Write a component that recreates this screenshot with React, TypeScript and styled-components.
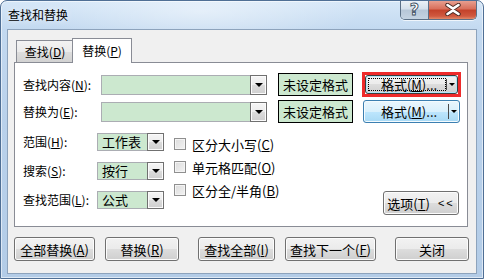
import React from 'react'
import styled, { createGlobalStyle, css } from 'styled-components'

const GlobalStyle = createGlobalStyle`
  html, body { margin: 0; padding: 0; background: #fff; }
  body {
    font-family: 'Noto Sans CJK SC', 'Microsoft YaHei', sans-serif;
    font-size: 12px;
    color: #000;
  }
  * { box-sizing: border-box; }
  u { text-underline-offset: 1px; }
`

const Window = styled.div`
  width: 484px;
  height: 279px;
  display: flex;
  flex-direction: column;
  border: 1px solid #4f6f95;
  border-radius: 7px 7px 0 0;
  overflow: hidden;
  background:
    radial-gradient(ellipse 160px 40px at 200px 10px, rgba(255, 255, 255, 0.45), rgba(255, 255, 255, 0)),
    linear-gradient(180deg, #d6e7f8 0px, #c3d9f0 28px, #b9d1eb 120px, #b3cce7 100%);
  box-shadow: inset 0 0 0 1px rgba(255, 255, 255, 0.55);
`

const TitleBar = styled.div`
  height: 28px;
  display: flex;
  align-items: flex-start;
  padding: 0 6px 0 7px;
`

const Title = styled.div`
  line-height: 28px;
  font-size: 12px;
  text-shadow: 0 0 6px rgba(255, 255, 255, 0.9);
`

const CaptionGroup = styled.div`
  margin-left: auto;
  margin-top: -1px;
  display: flex;
  height: 20px;
  border: 1px solid #5b6f86;
  border-top: none;
  border-radius: 0 0 5px 5px;
  overflow: hidden;
  box-shadow: 0 1px 0 rgba(255, 255, 255, 0.7);
`

const CaptionBtn = styled.div<{ $close?: boolean }>`
  height: 100%;
  display: flex;
  align-items: center;
  justify-content: center;
  ${(p) =>
    p.$close
      ? css`
          width: 47px;
          background: linear-gradient(180deg, #e9a596 0%, #d9715d 45%, #c4432b 55%, #d0593f 85%, #e28a6a 100%);
        `
      : css`
          width: 28px;
          border-right: 1px solid #5b6f86;
          background: linear-gradient(180deg, #eef3f8 0%, #d6e1ec 45%, #b7c7d8 55%, #c4d3e2 100%);
        `}
`

const HelpGlyph = styled.span`
  font-family: 'DejaVu Sans', sans-serif;
  font-weight: bold;
  font-size: 16px;
  line-height: 1;
  color: #fff;
  -webkit-text-stroke: 0.9px #3c4c5e;
`

const Client = styled.div`
  flex: 1;
  margin: 0 6px 4px 6px;
  background: #f0f0f0;
  border: 1px solid #8da3bc;
  padding: 8px 8px 0 6px;
`

const TabStrip = styled.div`
  display: flex;
  align-items: flex-end;
  height: 25px;
  margin-left: 2px;
  margin-bottom: -1px;
  position: relative;
  z-index: 1;
`

const Tab = styled.div<{ $active?: boolean }>`
  display: flex;
  align-items: center;
  justify-content: center;
  border: 1px solid #898c95;
  ${(p) =>
    p.$active
      ? css`
          height: 25px;
          width: 60px;
          background: #fff;
          border-bottom: none;
          margin-left: -1px;
          padding-bottom: 2px;
        `
      : css`
          height: 23px;
          width: 57px;
          background: linear-gradient(180deg, #f3f3f3 0%, #ebebeb 50%, #dedede 50%, #d2d2d2 100%);
          border-right: none;
        `}
`

const Panel = styled.div`
  width: 454px;
  height: 165px;
  background: #fff;
  border: 1px solid #898c95;
  padding: 9px 8px 0 8px;
  display: flex;
  flex-direction: column;
`

const Row = styled.div`
  display: flex;
  align-items: center;
  height: 25px;
  & + & {
    margin-top: 2px;
  }
`

const Label = styled.div<{ $w: number }>`
  width: ${(p) => p.$w}px;
  flex: none;
  white-space: nowrap;
  line-height: 16px;
`

const Combo = styled.div<{ $w: number; $h: number }>`
  width: ${(p) => p.$w}px;
  height: ${(p) => p.$h}px;
  flex: none;
  display: flex;
  border: 1px solid #abadb3;
  background: #cce8cf;
`

const ComboText = styled.div`
  flex: 1;
  padding-left: 4px;
  line-height: 16px;
  display: flex;
  align-items: center;
  font-size: 13px;
`

const DropBtn = styled.div`
  width: 17px;
  margin: -1px -1px -1px 0;
  border: 1px solid #707070;
  background: linear-gradient(180deg, #f5f5f5 0%, #ececec 50%, #dcdcdc 50%, #cfcfcf 100%);
  box-shadow: inset 0 0 0 1px #fbfbfb;
  display: flex;
  align-items: center;
  justify-content: center;
`

const Arrow = styled.span<{ $size?: number }>`
  width: 0;
  height: 0;
  border-left: ${(p) => p.$size ?? 4}px solid transparent;
  border-right: ${(p) => p.$size ?? 4}px solid transparent;
  border-top: ${(p) => p.$size ?? 4}px solid #000;
`

const UnsetBox = styled.div`
  width: 75px;
  height: 23px;
  flex: none;
  margin-left: 11px;
  border: 1px solid #000;
  background: #cce8cf;
  display: flex;
  align-items: center;
  justify-content: center;
  font-size: 13px;
`

const FormatFrame = styled.div<{ $marked?: boolean }>`
  width: 99px;
  height: 25px;
  flex: none;
  margin-left: 9px;
  border: ${(p) => (p.$marked ? '3px solid #ee2b2b' : '1px solid transparent')};
  display: flex;
`

const FormatBtn = styled.div<{ $hot?: boolean }>`
  flex: 1;
  display: flex;
  border-radius: 3px;
  border: 1px solid ${(p) => (p.$hot ? '#3c7fb1' : '#3c3c3c')};
  background: ${(p) =>
    p.$hot
      ? 'linear-gradient(180deg, #eaf6fd 0%, #d9f0fc 50%, #bee6fd 50%, #a7d9f5 100%)'
      : 'linear-gradient(180deg, #f2f2f2 0%, #ebebeb 50%, #dddddd 50%, #cfcfcf 100%)'};
  box-shadow: inset 0 0 0 1px ${(p) => (p.$hot ? '#f4fbfe' : '#aee6fa')};
`

const FormatMain = styled.div<{ $focus?: boolean }>`
  flex: 1;
  margin: 2px 0 2px 2px;
  display: flex;
  align-items: center;
  justify-content: center;
  font-size: 13px;
  border: 1px dotted ${(p) => (p.$focus ? '#000' : 'transparent')};
  padding-left: 4px;
`

const FormatSplit = styled.div`
  width: 11px;
  display: flex;
  align-items: center;
  justify-content: center;
  border-left: 1px solid #4a4a4a;
  margin: 3px 0;
`

const Lower = styled.div`
  display: flex;
  margin-top: 9px;
  height: 82px;
`

const FieldGrid = styled.div`
  display: grid;
  grid-template-columns: 74px 67px;
  grid-auto-rows: 18px;
  row-gap: 11px;
  align-items: center;
  align-self: flex-start;
`

const CheckCol = styled.div`
  display: flex;
  flex-direction: column;
  gap: 1px;
  margin-left: 10px;
`

const CheckRow = styled.label`
  height: 22px;
  display: flex;
  align-items: center;
  gap: 6px;
  font-size: 13px;
`

const CheckBox = styled.span`
  width: 12px;
  height: 12px;
  border: 1px solid #8f8f8f;
  background: linear-gradient(135deg, #dcdcdc 0%, #f2f2f2 100%);
  box-shadow: inset 0 0 0 1px #f4f4f4;
`

const Button = styled.div<{ $w: number; $gap?: number }>`
  width: ${(p) => p.$w}px;
  height: 24px;
  flex: none;
  margin-left: ${(p) => p.$gap ?? 0}px;
  display: flex;
  align-items: center;
  justify-content: center;
  border: 1px solid #707070;
  border-radius: 3px;
  background: linear-gradient(180deg, #f2f2f2 0%, #ebebeb 50%, #dddddd 50%, #cfcfcf 100%);
  box-shadow: inset 0 0 0 1px #fcfcfc;
  font-size: 13px;
  white-space: nowrap;
`

const OptionsButton = styled(Button)`
  margin-left: auto;
  align-self: flex-end;
  gap: 8px;
`

const Chevrons = styled.span`
  font-family: 'Liberation Sans', sans-serif;
  font-size: 11px;
  letter-spacing: 2px;
`

const ButtonRow = styled.div`
  display: flex;
  margin-top: 10px;
`

const fields = [
  { label: '范围', key: 'H', value: '工作表' },
  { label: '搜索', key: 'S', value: '按行' },
  { label: '查找范围', key: 'L', value: '公式' },
]

const checks = [
  { label: '区分大小写', key: 'C' },
  { label: '单元格匹配', key: 'O' },
  { label: '区分全/半角', key: 'B' },
]

const buttons = [
  { label: '全部替换', key: 'A', w: 81, gap: 0 },
  { label: '替换', key: 'R', w: 74, gap: 10 },
  { label: '查找全部', key: 'I', w: 77, gap: 19 },
  { label: '查找下一个', key: 'F', w: 91, gap: 10 },
  { label: '关闭', key: '', w: 74, gap: 19 },
]

function Key({ text, k }: { text: string; k: string }) {
  if (!k) return <>{text}</>
  return (
    <>
      {text}(<u>{k}</u>)
    </>
  )
}

export default function App() {
  return (
    <>
      <GlobalStyle />
      <Window>
        <TitleBar>
          <Title>查找和替换</Title>
          <CaptionGroup>
            <CaptionBtn>
              <HelpGlyph>?</HelpGlyph>
            </CaptionBtn>
            <CaptionBtn $close>
              <svg width="18" height="13" viewBox="0 0 18 13">
                <path
                  d="M3.5 2 L9 5.6 L14.5 2 M3.5 11 L9 7.4 L14.5 11"
                  stroke="#4a2a24"
                  strokeWidth="4.4"
                  strokeLinecap="round"
                  fill="none"
                />
                <path
                  d="M3.5 2 L9 5.6 L14.5 2 M3.5 11 L9 7.4 L14.5 11"
                  stroke="#fff"
                  strokeWidth="2.6"
                  strokeLinecap="round"
                  fill="none"
                />
              </svg>
            </CaptionBtn>
          </CaptionGroup>
        </TitleBar>
        <Client>
          <TabStrip>
            <Tab>
              <Key text="查找" k="D" />
            </Tab>
            <Tab $active>
              <Key text="替换" k="P" />
            </Tab>
          </TabStrip>
          <Panel>
            <Row>
              <Label $w={78}>
                <Key text="查找内容" k="N" />:
              </Label>
              <Combo $w={166} $h={20}>
                <ComboText />
                <DropBtn>
                  <Arrow />
                </DropBtn>
              </Combo>
              <UnsetBox>未设定格式</UnsetBox>
              <FormatFrame $marked>
                <FormatBtn>
                  <FormatMain $focus>
                    <Key text="格式" k="M" />...
                  </FormatMain>
                  <FormatSplit>
                    <Arrow $size={3} />
                  </FormatSplit>
                </FormatBtn>
              </FormatFrame>
            </Row>
            <Row>
              <Label $w={78}>
                <Key text="替换为" k="E" />:
              </Label>
              <Combo $w={166} $h={20}>
                <ComboText />
                <DropBtn>
                  <Arrow />
                </DropBtn>
              </Combo>
              <UnsetBox>未设定格式</UnsetBox>
              <FormatFrame>
                <FormatBtn $hot>
                  <FormatMain>
                    <Key text="格式" k="M" />...
                  </FormatMain>
                  <FormatSplit>
                    <Arrow $size={3} />
                  </FormatSplit>
                </FormatBtn>
              </FormatFrame>
            </Row>
            <Lower>
              <FieldGrid>
                {fields.map((f) => (
                  <React.Fragment key={f.key}>
                    <Label $w={74}>
                      <Key text={f.label} k={f.key} />:
                    </Label>
                    <Combo $w={67} $h={18}>
                      <ComboText>{f.value}</ComboText>
                      <DropBtn>
                        <Arrow />
                      </DropBtn>
                    </Combo>
                  </React.Fragment>
                ))}
              </FieldGrid>
              <CheckCol>
                {checks.map((c) => (
                  <CheckRow key={c.key}>
                    <CheckBox />
                    <span>
                      <Key text={c.label} k={c.key} />
                    </span>
                  </CheckRow>
                ))}
              </CheckCol>
              <OptionsButton $w={76}>
                <span>
                  <Key text="选项" k="T" />
                </span>
                <Chevrons>&lt;&lt;</Chevrons>
              </OptionsButton>
            </Lower>
          </Panel>
          <ButtonRow>
            {buttons.map((b) => (
              <Button key={b.label} $w={b.w} $gap={b.gap}>
                <Key text={b.label} k={b.key} />
              </Button>
            ))}
          </ButtonRow>
        </Client>
      </Window>
    </>
  )
}
